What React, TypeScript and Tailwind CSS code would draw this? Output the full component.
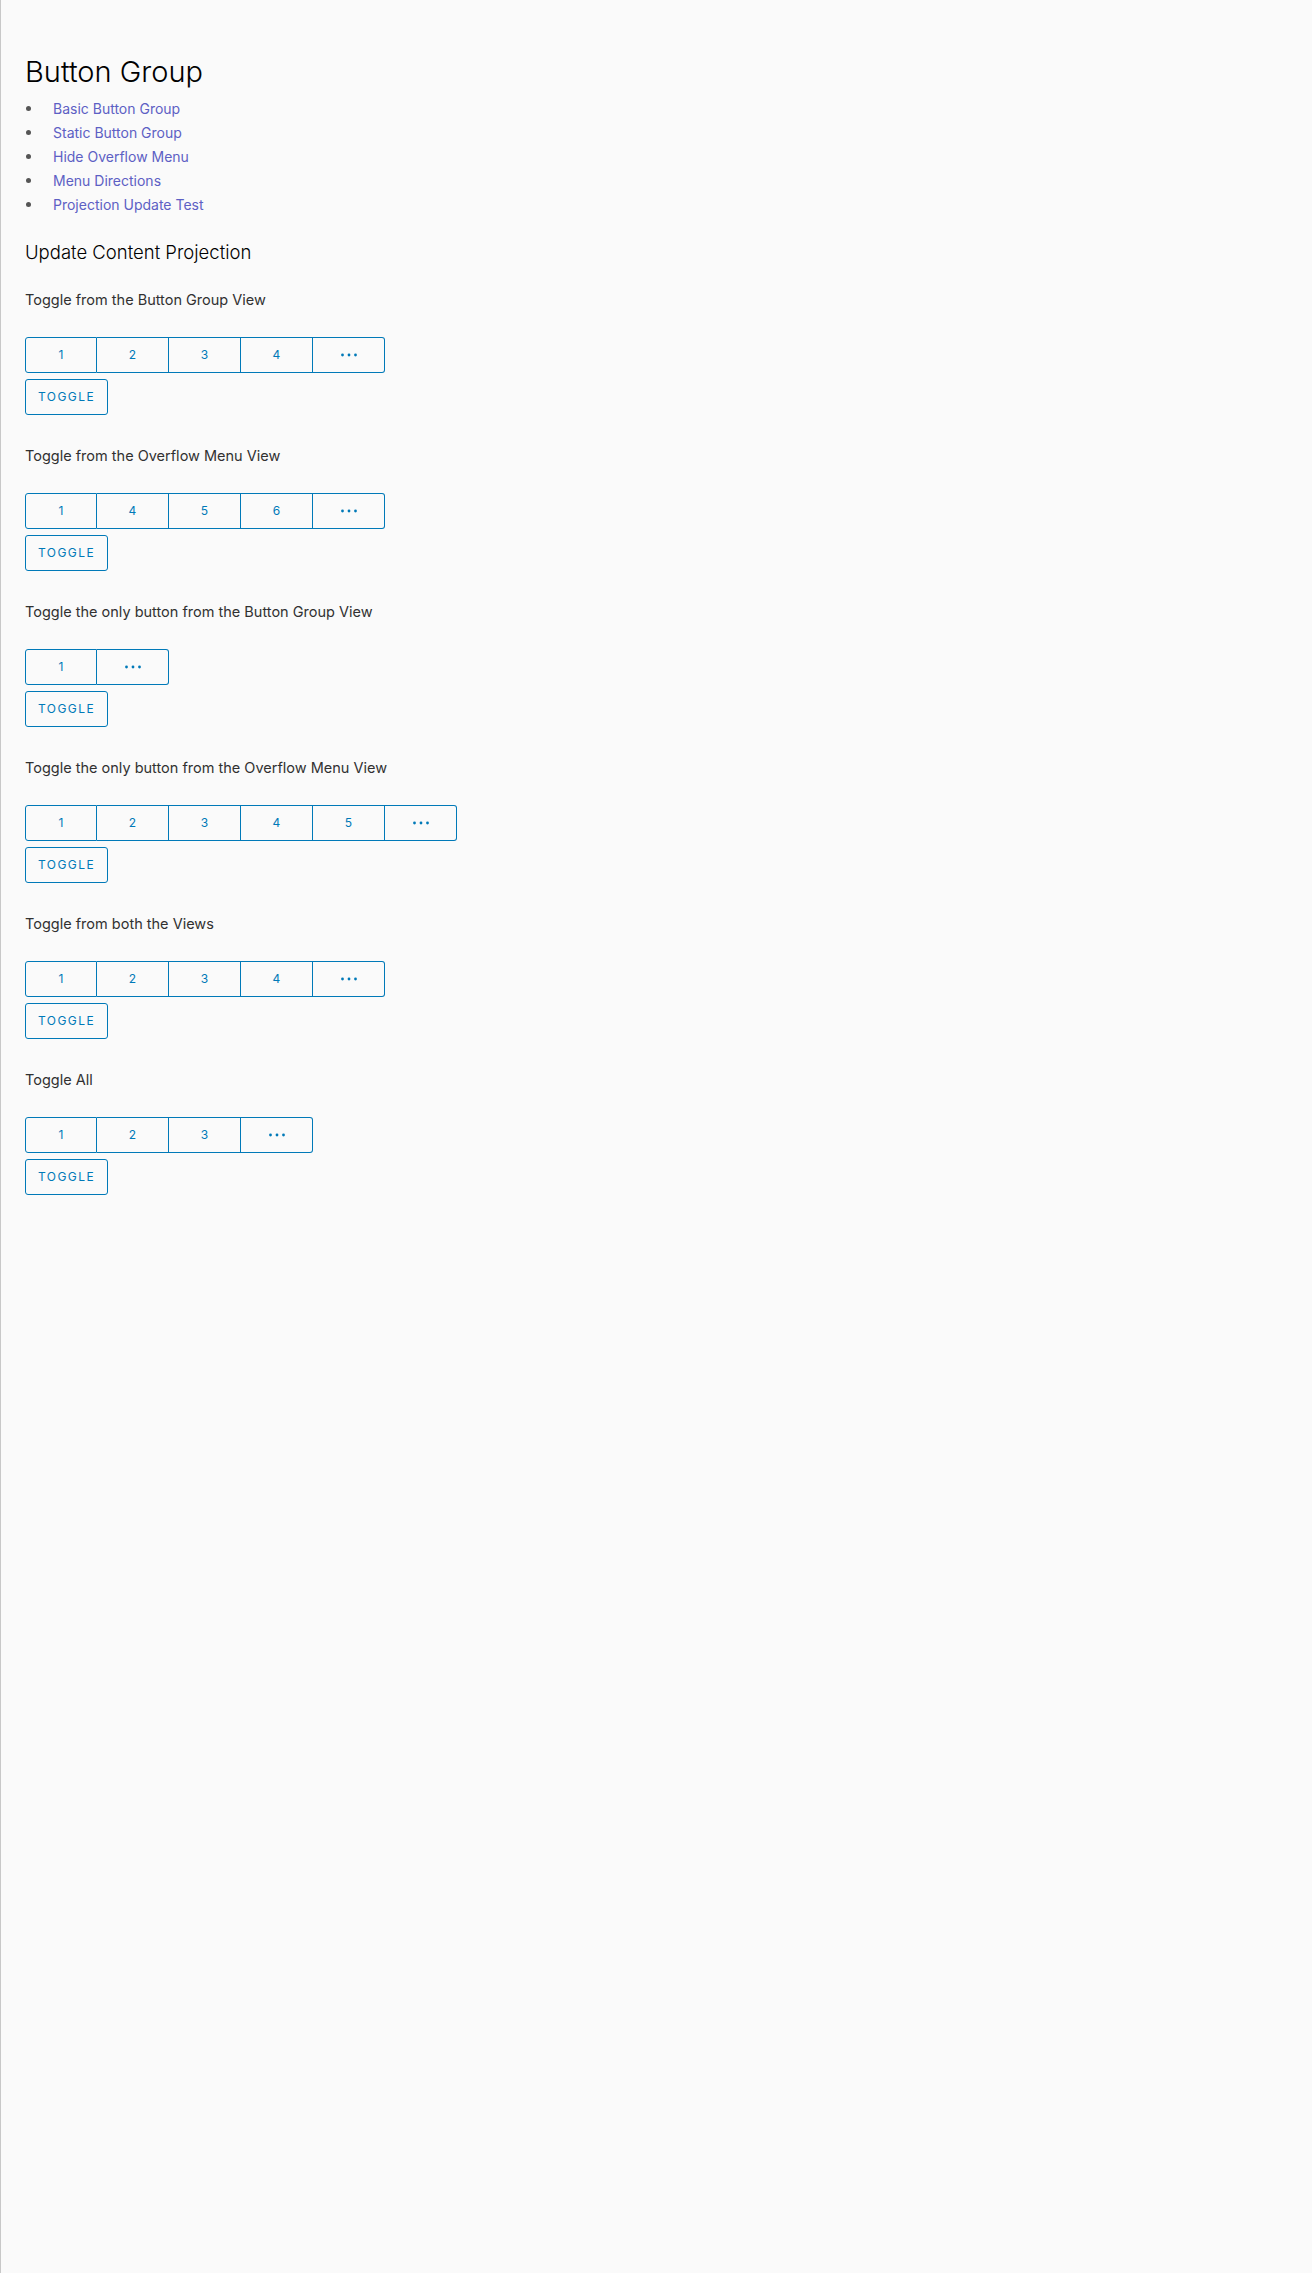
const links = [
  "Basic Button Group",
  "Static Button Group",
  "Hide Overflow Menu",
  "Menu Directions",
  "Projection Update Test",
];

const sections = [
  { label: "Toggle from the Button Group View", buttons: ["1", "2", "3", "4"] },
  { label: "Toggle from the Overflow Menu View", buttons: ["1", "4", "5", "6"] },
  { label: "Toggle the only button from the Button Group View", buttons: ["1"] },
  { label: "Toggle the only button from the Overflow Menu View", buttons: ["1", "2", "3", "4", "5"] },
  { label: "Toggle from both the Views", buttons: ["1", "2", "3", "4"] },
  { label: "Toggle All", buttons: ["1", "2", "3"] },
];

function Dots() {
  return (
    <svg width="16" height="4" viewBox="0 0 16 4" fill="#0079b8">
      <circle cx="1.5" cy="2" r="1.4" />
      <circle cx="8" cy="2" r="1.4" />
      <circle cx="14.5" cy="2" r="1.4" />
    </svg>
  );
}

function ButtonGroup({ buttons }: { buttons: string[] }) {
  const cells = [...buttons, "..."];
  return (
    <div className="flex">
      {cells.map((b, i) => (
        <button
          key={i}
          className={`h-9 w-[72px] flex items-center justify-center border-y border-r border-[#0079b8] text-[12px] font-normal text-[#0079b8] ${
            i === 0 ? "border-l rounded-l-[3px]" : ""
          } ${i === cells.length - 1 ? "rounded-r-[3px]" : ""}`}
        >
          {b === "..." ? <Dots /> : b}
        </button>
      ))}
    </div>
  );
}

export default function App() {
  return (
    <div
      className="min-h-[2273px] bg-[#fafafa] border-l border-[#c8c8c8] pl-6 pt-[52px] text-[#313131]"
      style={{ fontFamily: "Inter, 'Open Sans', sans-serif" }}
    >
      <h1 className="text-[29px] leading-[40px] font-light text-black">Button Group</h1>
      <ul className="mt-1">
        {links.map((l) => (
          <li key={l} className="flex items-center h-6 text-[14px]">
            <span className="w-[5px] h-[5px] rounded-full bg-[#555] ml-[1px]" />
            <a href="#" className="ml-[22px] text-[#5d60c4]">
              {l}
            </a>
          </li>
        ))}
      </ul>
      <h2 className="mt-[22px] text-[18.5px] leading-[28px] font-light text-black">Update Content Projection</h2>
      {sections.map((s, i) => (
        <div key={i} className={i === 0 ? "mt-[22px]" : "mt-[29px]"}>
          <p className="text-[14.5px] leading-6">{s.label}</p>
          <div className="mt-[25px]">
            <ButtonGroup buttons={s.buttons} />
          </div>
          <button className="mt-[6px] h-9 px-3 border border-[#0079b8] rounded-[3px] text-[12px] font-normal tracking-[0.12em] text-[#0079b8]">
            TOGGLE
          </button>
        </div>
      ))}
    </div>
  );
}
